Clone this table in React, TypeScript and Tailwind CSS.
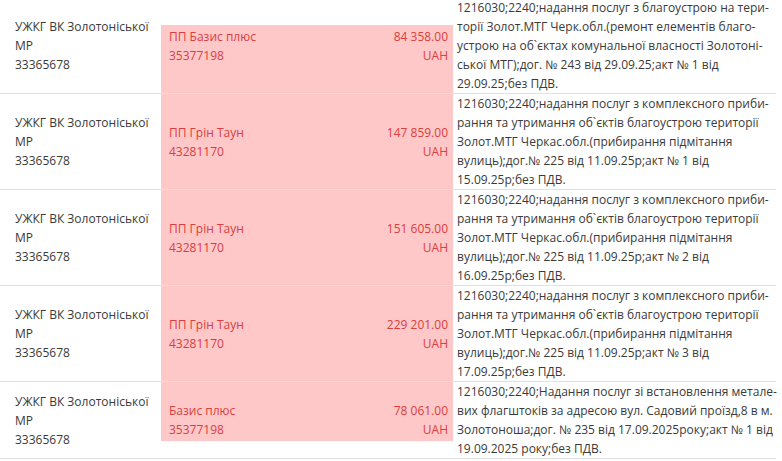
import clsx from "clsx";

type Row = {
  payer: string[];
  name: string;
  code: string;
  amount: string;
  purpose: string[];
  bg?: string;
};

const PAYER = ["УЖКГ ВК Золотоніської", "МР", "33365678"];

const ROWS: Row[] = [
  {
    payer: PAYER,
    name: "ПП Базис плюс",
    code: "35377198",
    amount: "84 358.00",
    purpose: [
      "1216030;2240;надання послуг з благоустрою на тери-",
      "торії Золот.МТГ Черк.обл.(ремонт елементів благо-",
      "устрою на об`єктах комунальної власності Золотоні-",
      "ської МТГ);дог. № 243 від 29.09.25;акт № 1 від",
      "29.09.25;без ПДВ.",
    ],
    bg: "bg-[linear-gradient(to_bottom,transparent_27px,#ffc8c8_27px)]",
  },
  {
    payer: PAYER,
    name: "ПП Грін Таун",
    code: "43281170",
    amount: "147 859.00",
    purpose: [
      "1216030;2240;надання послуг з комплексного приби-",
      "рання та утримання об`єктів благоустрою території",
      "Золот.МТГ Черкас.обл.(прибирання підмітання",
      "вулиць);дог.№ 225 від 11.09.25р;акт № 1 від",
      "15.09.25р;без ПДВ.",
    ],
  },
  {
    payer: PAYER,
    name: "ПП Грін Таун",
    code: "43281170",
    amount: "151 605.00",
    purpose: [
      "1216030;2240;надання послуг з комплексного приби-",
      "рання та утримання об`єктів благоустрою території",
      "Золот.МТГ Черкас.обл.(прибирання підмітання",
      "вулиць);дог.№ 225 від 11.09.25р;акт № 2 від",
      "16.09.25р;без ПДВ.",
    ],
  },
  {
    payer: PAYER,
    name: "ПП Грін Таун",
    code: "43281170",
    amount: "229 201.00",
    purpose: [
      "1216030;2240;надання послуг з комплексного приби-",
      "рання та утримання об`єктів благоустрою території",
      "Золот.МТГ Черкас.обл.(прибирання підмітання",
      "вулиць);дог.№ 225 від 11.09.25р;акт № 3 від",
      "17.09.25р;без ПДВ.",
    ],
  },
  {
    payer: PAYER,
    name: "Базис плюс",
    code: "35377198",
    amount: "78 061.00",
    purpose: [
      "1216030;2240;Надання послуг зі встановлення метале-",
      "вих флагштоків за адресою вул. Садовий проїзд,8 в м.",
      "Золотоноша;дог. № 235 від 17.09.2025року;акт № 1 від",
      "19.09.2025 року;без ПДВ.",
    ],
    bg: "bg-[linear-gradient(to_bottom,#ffc8c8_59px,transparent_59px)]",
  },
];

export default function App() {
  return (
    <div className="w-[782px] h-[461px] overflow-hidden bg-white font-['Open_Sans',sans-serif] text-[12px] leading-[19px] text-[#3a3a3a]">
      <div className="w-[776px] -mt-[2px]">
        {ROWS.map((row, i) => (
          <div key={i} className="flex border-b border-[#e2e2e2]">
            <div className="w-[161px] shrink-0 pl-[15px] flex flex-col justify-center">
              {row.payer.map((l) => (
                <div key={l}>{l}</div>
              ))}
            </div>
            <div
              className={clsx(
                "w-[292px] shrink-0 flex items-center justify-between pl-[8px] pr-[5px] text-[#d8403f]",
                row.bg ?? "bg-[#ffc8c8]",
              )}
            >
              <div>
                <div>{row.name}</div>
                <div>{row.code}</div>
              </div>
              <div className="text-right">
                <div>{row.amount}</div>
                <div>UAH</div>
              </div>
            </div>
            <div className="flex-1 pl-[4px]">
              {row.purpose.map((l, j) => (
                <div key={j} className="whitespace-nowrap">
                  {l}
                </div>
              ))}
            </div>
          </div>
        ))}
      </div>
    </div>
  );
}
